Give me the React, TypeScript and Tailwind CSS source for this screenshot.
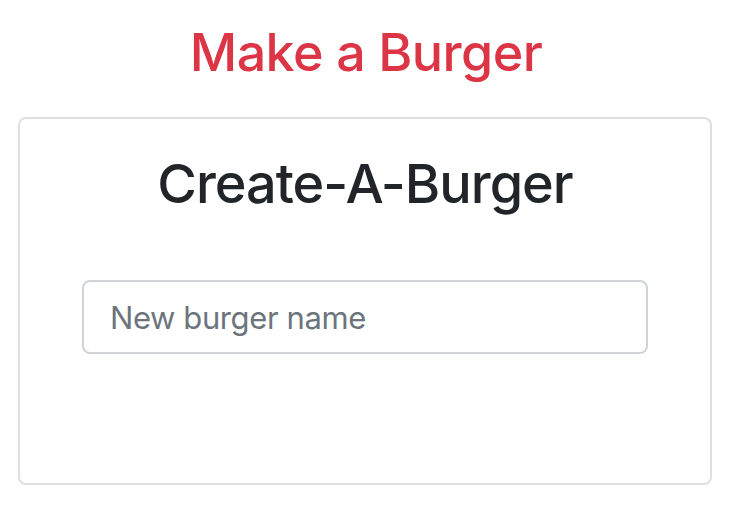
export default function App() {
  return (
    <div className="min-h-[522px] bg-white font-['Inter',sans-serif]">
      <h1 className="pt-[21px] text-center text-[52px] leading-[64px] font-medium tracking-[-0.6px] text-[#dc3545]">
        Make a Burger
      </h1>
      <div className="ml-[18px] mt-[32px] h-[368px] w-[694px] rounded-[8px] border-2 border-[#dfdfdf]">
        <h2 className="pt-[33px] text-center text-[54px] leading-[64px] font-medium tracking-[-1px] text-[#212529]">
          Create-A-Burger
        </h2>
        <form className="mt-[64px] pl-[62px]">
          <input
            type="text"
            placeholder="New burger name"
            className="h-[74px] w-[566px] rounded-[8px] border-2 border-[#ced4da] px-[26px] text-[31px] tracking-[-0.4px] text-[#495057] placeholder:text-[#6c757d] outline-none"
          />
        </form>
      </div>
    </div>
  );
}
